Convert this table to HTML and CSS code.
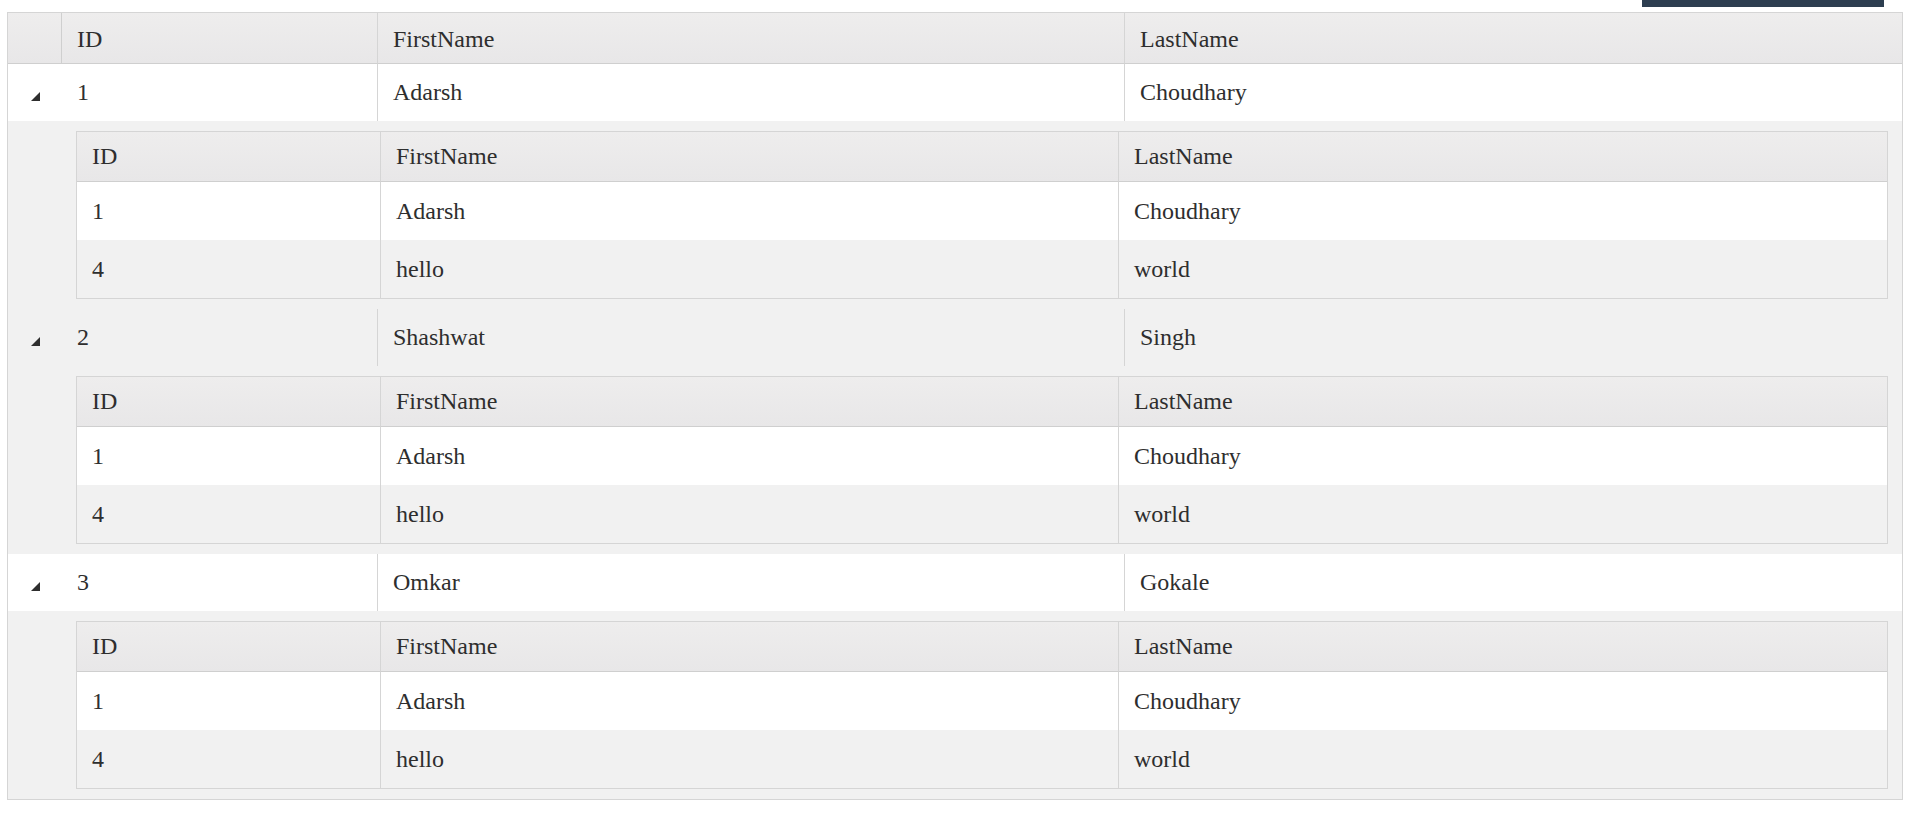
FILE: index.html
```html
<!DOCTYPE html>
<html lang="en">
<head>
<meta charset="utf-8">
<title>Grid</title>
<link rel="stylesheet" href="styles.css">
</head>
<body>
<div class="page">
  <div class="topbar"><div class="topbar-btn"></div></div>
  <table class="grid">
    <colgroup><col class="c-h"><col class="c-id"><col class="c-fn"><col class="c-ln"></colgroup>
    <thead>
      <tr class="hrow"><th class="hcell"></th><th>ID</th><th class="bl">FirstName</th><th class="bl">LastName</th></tr>
    </thead>
    <tbody>
      <tr class="mrow"><td class="hcell"><svg class="tri" width="9" height="9" viewBox="0 0 9 9"><polygon points="9,0 9,9 0,9" fill="#2e2e2e"/></svg></td><td>1</td><td class="bl">Adarsh</td><td class="bl">Choudhary</td></tr>
      <tr class="drow"><td class="hcell"></td><td class="dcell" colspan="3">
        <table class="sub">
          <colgroup><col class="s-id"><col class="s-fn"><col class="s-ln"></colgroup>
          <thead><tr class="shrow"><th>ID</th><th class="bl">FirstName</th><th class="bl">LastName</th></tr></thead>
          <tbody>
            <tr class="srow"><td>1</td><td class="bl">Adarsh</td><td class="bl">Choudhary</td></tr>
            <tr class="srow alt"><td>4</td><td class="bl">hello</td><td class="bl">world</td></tr>
          </tbody>
        </table>
      </td></tr>
      <tr class="mrow alt"><td class="hcell"><svg class="tri" width="9" height="9" viewBox="0 0 9 9"><polygon points="9,0 9,9 0,9" fill="#2e2e2e"/></svg></td><td>2</td><td class="bl">Shashwat</td><td class="bl">Singh</td></tr>
      <tr class="drow"><td class="hcell"></td><td class="dcell" colspan="3">
        <table class="sub">
          <colgroup><col class="s-id"><col class="s-fn"><col class="s-ln"></colgroup>
          <thead><tr class="shrow"><th>ID</th><th class="bl">FirstName</th><th class="bl">LastName</th></tr></thead>
          <tbody>
            <tr class="srow"><td>1</td><td class="bl">Adarsh</td><td class="bl">Choudhary</td></tr>
            <tr class="srow alt"><td>4</td><td class="bl">hello</td><td class="bl">world</td></tr>
          </tbody>
        </table>
      </td></tr>
      <tr class="mrow"><td class="hcell"><svg class="tri" width="9" height="9" viewBox="0 0 9 9"><polygon points="9,0 9,9 0,9" fill="#2e2e2e"/></svg></td><td>3</td><td class="bl">Omkar</td><td class="bl">Gokale</td></tr>
      <tr class="drow"><td class="hcell"></td><td class="dcell" colspan="3">
        <table class="sub">
          <colgroup><col class="s-id"><col class="s-fn"><col class="s-ln"></colgroup>
          <thead><tr class="shrow"><th>ID</th><th class="bl">FirstName</th><th class="bl">LastName</th></tr></thead>
          <tbody>
            <tr class="srow"><td>1</td><td class="bl">Adarsh</td><td class="bl">Choudhary</td></tr>
            <tr class="srow alt"><td>4</td><td class="bl">hello</td><td class="bl">world</td></tr>
          </tbody>
        </table>
      </td></tr>
    </tbody>
  </table>
</div>
</body>
</html>
```
FILE: styles.css
```css
* { box-sizing: border-box; }
html, body { margin: 0; padding: 0; background: #ffffff; }
body {
  font-family: "Liberation Serif", "Times New Roman", serif;
  font-size: 24px;
  color: #2e2e2e;
}
.page { padding: 0 12px 0 7px; }
.topbar {
  height: 12px;
  display: flex;
  justify-content: flex-end;
  padding-right: 19px;
}
.topbar-btn { width: 242px; height: 7px; background: #2d3e50; }

table { border-collapse: separate; border-spacing: 0; table-layout: fixed; }
th, td { padding: 0 0 0 15px; text-align: left; font-weight: normal; vertical-align: middle; white-space: nowrap; }

.grid { width: 1896px; border: 1px solid #d5d5d5; }
.c-h { width: 54px; }
.c-id { width: 315px; }
.c-fn { width: 747px; }
.c-ln { width: 778px; }

.hrow th {
  height: 51px;
  padding-top: 2px;
  background: linear-gradient(to bottom, #eeeded, #e8e7e8);
  border-bottom: 1px solid #cfcfcf;
}
.hrow th.hcell { border-right: 1px solid #cfcfcf; }
.bl { border-left: 1px solid #d5d5d5; }

.mrow td { height: 57px; background: #ffffff; }
.mrow.alt td { background: #f1f1f1; }
td.hcell { padding: 0; text-align: center; }
.tri { display: inline-block; vertical-align: middle; margin-top: 4px; }

.drow td { background: #f1f1f1; }
.drow td.dcell { padding: 10px 14px; }

.sub { width: 1812px; border: 1px solid #d5d5d5; }
.s-id { width: 303px; }
.s-fn { width: 738px; }
.s-ln { width: 769px; }
.shrow th {
  height: 50px;
  background: linear-gradient(to bottom, #eeeded, #e8e7e8);
  border-bottom: 1px solid #cfcfcf;
}
.srow td { height: 58px; background: #ffffff; }
.srow.alt td { background: #f1f1f1; }
```
